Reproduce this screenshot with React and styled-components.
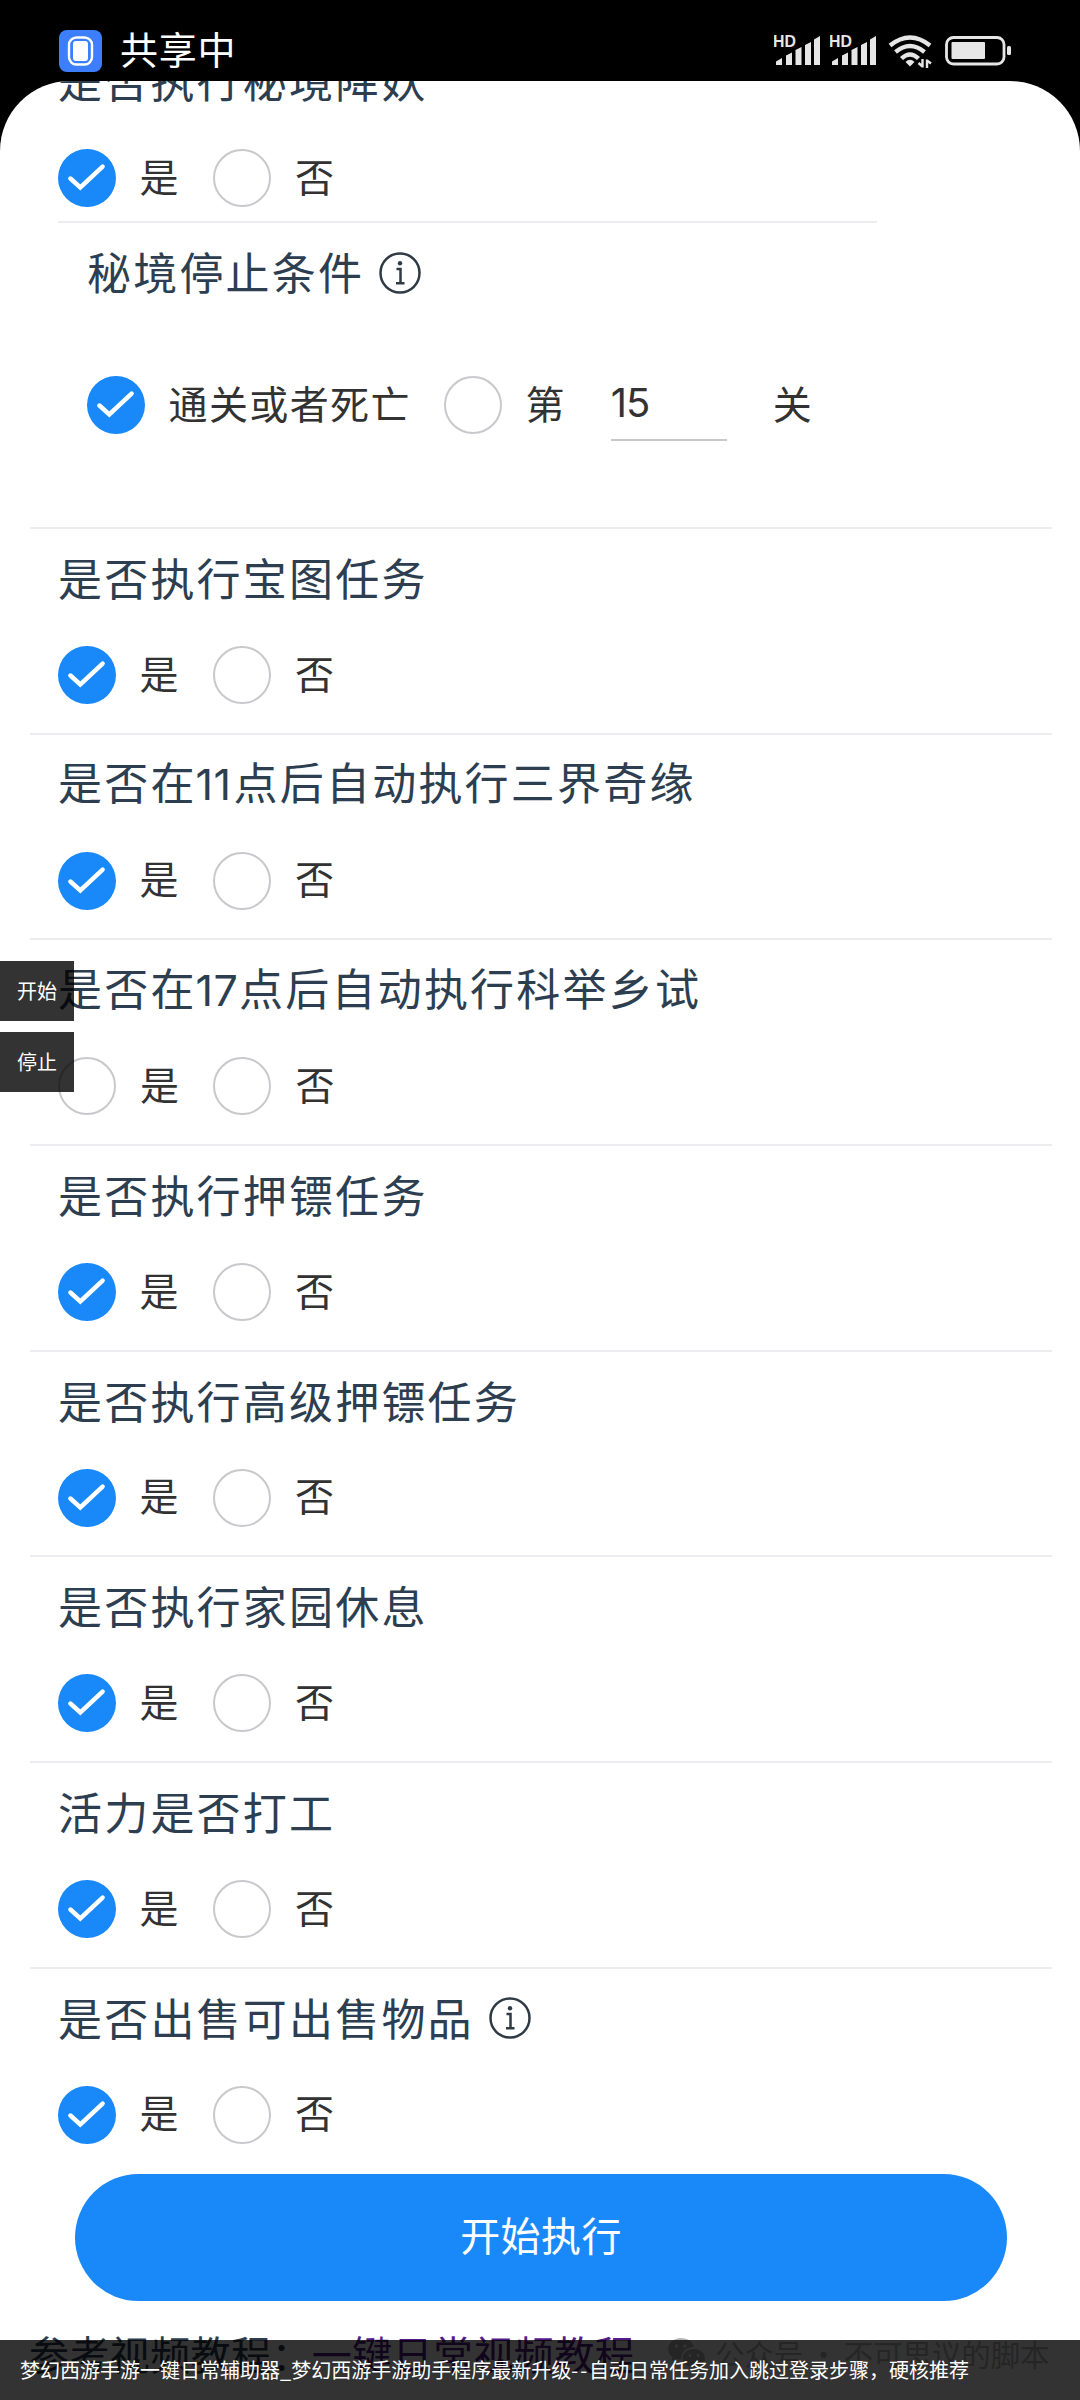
import React from "react";
import styled, { createGlobalStyle } from "styled-components";

const Global = createGlobalStyle`
  * { box-sizing: border-box; }
  body {
    margin: 0;
    background: #000;
    font-family: "Noto Sans CJK SC", sans-serif;
  }
`;

const Screen = styled.div`
  width: 1080px;
  height: 2400px;
  overflow: hidden;
  position: relative;
  display: flex;
  flex-direction: column;
  background: #000;
`;

const StatusBar = styled.header`
  flex: none;
  height: 81px;
  padding: 0 69px 0 59px;
  display: flex;
  justify-content: space-between;
`;

const Sharing = styled.div`
  display: flex;
  align-items: center;
  gap: 18px;
  padding-top: 20px;
  color: #fff;
  font-size: 38px;
  line-height: 56px;
  letter-spacing: 0.8px;
`;

const SharingLabel = styled.span`
  margin-top: -6px;
`;

const StatusIcons = styled.div`
  display: flex;
  padding-top: 34px;
`;

const Sheet = styled.main`
  flex: 1;
  min-height: 0;
  overflow: hidden;
  background: #fff;
  border-radius: 70px 70px 0 0;
  display: flex;
  flex-direction: column;
`;

const CutTitleRow = styled.div`
  flex: none;
  height: 68px;
  padding-left: 58px;
  overflow: hidden;
`;

const Title = styled.h2`
  margin: ${(p) => p.$top || 0}px 0 0;
  display: flex;
  align-items: center;
  gap: 15px;
  height: 64px;
  font-size: 44px;
  line-height: 64px;
  font-weight: 400;
  letter-spacing: 2.2px;
  color: #2c3e50;
  white-space: nowrap;

  svg {
    margin-top: 3px;
  }
`;

const Digits = styled.span`
  display: inline-block;
  width: ${(p) => p.$width}px;
  margin-left: -1px;
  font-family: Inter, sans-serif;
  font-size: 43px;
  letter-spacing: ${(p) => p.$spacing}px;
`;

const OptionRow = styled.div`
  display: flex;
  align-items: center;
  height: 58px;
  font-size: 39px;
  line-height: 58px;
  letter-spacing: 1.4px;
  color: #323233;
  white-space: nowrap;
`;

const Radio = styled.span`
  flex: none;
  width: ${(p) => (p.$on ? 57.5 : 58)}px;
  height: 58px;
  border-radius: 50%;
  display: flex;
  align-items: center;
  justify-content: center;
  border: 2px solid ${(p) => (p.$on ? "#1989fa" : "#c8c9cc")};
  background: ${(p) => (p.$on ? "#1989fa" : "transparent")};
`;

const OptionLabel = styled.span`
  margin: -7px ${(p) => (p.$right === undefined ? 33 : p.$right)}px 0 ${(p) => (p.$left === undefined ? 24 : p.$left)}px;
`;

const SubPanel = styled.div`
  flex: none;
  height: 306px;
  margin: 0 28px 0 30px;
  padding: 16px 0 0 57px;
  border-bottom: 2px solid #ebedf0;
  display: flex;
  flex-direction: column;
  gap: 73px;
`;

const FirstOptions = styled.div`
  flex: none;
  margin: 0 203px 0 58px;
  height: 74px;
  border-bottom: 2px solid #ebedf0;
`;

const StageInput = styled.div`
  width: 116px;
  height: 60px;
  margin: 12px 0 0;
  border-bottom: 2px solid #c8c9cc;
  font-family: Inter, sans-serif;
  font-size: 40px;
  line-height: 44px;
  letter-spacing: -1px;
`;

const Section = styled.section`
  flex: none;
  height: 205.7px;
  margin: 0 28px 0 30px;
  padding: 16px 0 0 28px;
  border-bottom: 2px solid ${(p) => (p.$last ? "transparent" : "#ebedf0")};
  display: flex;
  flex-direction: column;
  gap: 37px;
`;

const StartButton = styled.button`
  flex: none;
  width: 932px;
  height: 127px;
  margin: -1px 0 0 75px;
  border: 0;
  border-radius: 64px;
  background: #1989fa;
  color: #fff;
  font: 400 40px/58px "Noto Sans CJK SC", sans-serif;
  letter-spacing: 0.4px;
  padding: 0 0 7px;
`;

const Tutorial = styled.div`
  display: flex;
  align-items: center;
  padding-left: 29px;
  margin-top: 23px;
  font-size: 40px;
  line-height: 58px;
  letter-spacing: 0.4px;
  color: #2c3e50;
  white-space: nowrap;
`;

const TutorialLink = styled.a`
  color: #551a8b;
`;

const Account = styled.div`
  display: flex;
  align-items: center;
  gap: 8px;
  margin-left: 32px;
  font-size: 29.5px;
  letter-spacing: -0.1px;
  word-spacing: -1px;
  color: #b8b8b8;
`;

const SideButtons = styled.div`
  position: absolute;
  left: 0;
  top: 961px;
  display: flex;
  flex-direction: column;
  gap: 11px;
`;

const SideButton = styled.button`
  width: 74px;
  height: 60px;
  padding: 0;
  border: 0;
  background: rgba(0, 0, 0, 0.8);
  color: #fff;
  font: 400 20px/30px "Noto Sans CJK SC", sans-serif;
`;

const Caption = styled.div`
  position: absolute;
  left: 0;
  right: 0;
  bottom: 0;
  height: 60px;
  padding-left: 20px;
  background: rgba(0, 0, 0, 0.8);
  color: #fff;
  font-size: 20px;
  line-height: 59px;
  white-space: nowrap;
`;

const Dashes = styled.span`
  letter-spacing: 2px;
`;

const WifiSvg = styled.svg`
  margin-left: 2px;
`;

const PhoneIcon = () => (
  <svg width="43" height="42" viewBox="0 0 43 42">
    <rect width="43" height="42" rx="8" fill="#3d7ffb" />
    <rect x="10" y="7.500" width="23" height="27" rx="7.500" fill="none" stroke="#fff" strokeWidth="2.400" />
    <rect x="14" y="11" width="15" height="20" rx="3" fill="#fff" />
  </svg>
);

const Signal = () => (
  <svg width="56" height="34" viewBox="0 0 56 34" fill="#e6e6e6">
    <text x="-1" y="12.800" fontFamily="Liberation Sans, sans-serif" fontWeight="700" fontSize="15.800">HD</text>
    <path d="M2 31v-3.500l6-3.500v7zM12 31v-9.500l6-3v12.500zM21.500 31v-15l6-3v18zM31 31v-20l6-3v23zM40 31v-25.500l6-3.500v29z" />
  </svg>
);

const Wifi = () => (
  <WifiSvg width="57" height="36" viewBox="0 0 57 36">
    <g fill="none" stroke="#e6e6e6" strokeWidth="4.400">
      <path d="M2 11.500Q22 -4.500 42 11.500" />
      <path d="M7.500 18Q22 6 36.500 18" />
      <path d="M13.500 24.500Q22 16.500 30.500 24.500" />
    </g>
    <path d="M17.500 28q4.500-4.500 9 0L22 32.500z" fill="#e6e6e6" />
    <path d="M34.500 25v8.500M39 34v-8.500M30.500 29l4 3.500M43 29.500l-4-3" stroke="#e6e6e6" strokeWidth="2.400" fill="none" />
  </WifiSvg>
);

const Battery = () => (
  <svg width="66" height="34" viewBox="0 0 66 34">
    <rect x="1.500" y="3.500" width="57.500" height="26.500" rx="7" fill="none" stroke="#e6e6e6" strokeWidth="2.800" />
    <rect x="6.500" y="8" width="33.500" height="17" rx="1" fill="#e6e6e6" />
    <rect x="62" y="12" width="4" height="9" rx="1.500" fill="#e6e6e6" />
  </svg>
);

const Check = () => (
  <svg width="54" height="54" viewBox="0 0 54 54">
    <path d="M10.500 27.500L20.500 36.500L43 15.500" fill="none" stroke="#fff" strokeWidth="4.500" strokeLinecap="round" />
  </svg>
);

const Info = () => (
  <svg width="42" height="42" viewBox="0 0 42 42" fill="none" stroke="#2f3a45" strokeWidth="2.500">
    <circle cx="21" cy="21" r="19.500" />
    <circle cx="21" cy="11.300" r="2.200" fill="#2f3a45" stroke="none" />
    <path d="M17.500 17h4v14M17 31.200h8.500" />
  </svg>
);

const WeChat = () => (
  <svg width="40" height="32" viewBox="0 0 40 32">
    <path d="M14 1C6.500 1 1 6 1 12c0 3.500 1.800 6.300 4.600 8.300L4.500 24l4.400-2.200q2.600.8 5.100.8C14 14 20 10 27 10 26 5 21 1 14 1z" fill="#b8b8b8" />
    <path d="M27 12c-6.500 0-11.500 4-11.500 9.300S20.500 30.500 27 30.500q2.200 0 4-.6l3.500 1.800-.9-3c2.600-1.800 4.400-4.200 4.400-7.200C38 16 33 12 27 12z" fill="#b8b8b8" />
    <g fill="#fff">
      <circle cx="9.500" cy="9" r="1.700" />
      <circle cx="18" cy="9" r="1.700" />
      <circle cx="23" cy="18.500" r="1.400" />
      <circle cx="31" cy="18.500" r="1.400" />
    </g>
  </svg>
);

const YesNo = ({ yes = true }) => (
  <OptionRow>
    <Radio $on={yes}>{yes && <Check />}</Radio>
    <OptionLabel>是</OptionLabel>
    <Radio />
    <OptionLabel>否</OptionLabel>
  </OptionRow>
);

const sections = [
  { title: "是否执行宝图任务" },
  { title: <span>是否在<Digits $width={38} $spacing={0.5}>11</Digits>点后自动执行三界奇缘</span> },
  { title: <span>是否在<Digits $width={43.5} $spacing={0.5}>17</Digits>点后自动执行科举乡试</span>, yes: false },
  { title: "是否执行押镖任务" },
  { title: "是否执行高级押镖任务" },
  { title: "是否执行家园休息" },
  { title: "活力是否打工" },
  { title: "是否出售可出售物品", info: true },
];

export default function App() {
  return (
    <Screen>
      <Global />
      <StatusBar>
        <Sharing>
          <PhoneIcon />
          <SharingLabel>共享中</SharingLabel>
        </Sharing>
        <StatusIcons>
          <Signal />
          <Signal />
          <Wifi />
          <Battery />
        </StatusIcons>
      </StatusBar>
      <Sheet>
        <CutTitleRow>
          <Title $top={-34}>是否执行秘境降妖</Title>
        </CutTitleRow>
        <FirstOptions>
          <YesNo />
        </FirstOptions>
        <SubPanel>
          <Title>
            秘境停止条件
            <Info />
          </Title>
          <OptionRow>
            <Radio $on><Check /></Radio>
            <OptionLabel $right={33.5}>通关或者死亡</OptionLabel>
            <Radio />
            <OptionLabel $left={23} $right={45}>第</OptionLabel>
            <StageInput>15</StageInput>
            <OptionLabel $left={46}>关</OptionLabel>
          </OptionRow>
        </SubPanel>
        {sections.map((s, i) => (
          <Section key={i} $last={i === sections.length - 1}>
            <Title>
              {s.title}
              {s.info && <Info />}
            </Title>
            <YesNo yes={s.yes} />
          </Section>
        ))}
        <StartButton>开始执行</StartButton>
        <Tutorial>
          <span>参考视频教程：</span>
          <TutorialLink>一键日常视频教程</TutorialLink>
          <Account>
            <WeChat />
            <span>公众号 · 不可思议的脚本</span>
          </Account>
        </Tutorial>
      </Sheet>
      <SideButtons>
        <SideButton>开始</SideButton>
        <SideButton>停止</SideButton>
      </SideButtons>
      <Caption>
        梦幻西游手游一键日常辅助器_梦幻西游手游助手程序最新升级<Dashes>--</Dashes>自动日常任务加入跳过登录步骤，硬核推荐
      </Caption>
    </Screen>
  );
}
